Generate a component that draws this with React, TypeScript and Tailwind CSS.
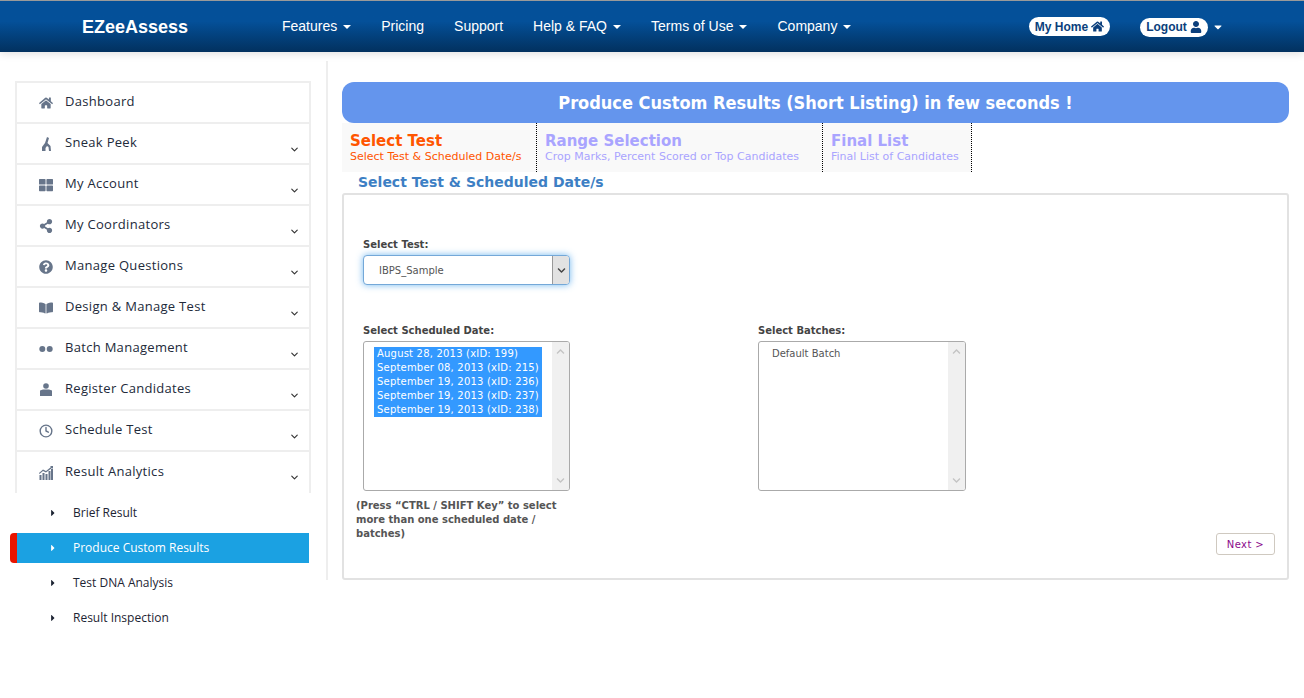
import React from "react";
import { FaHome, FaUser, FaQuestionCircle, FaShareAlt, FaThLarge, FaBookOpen, FaCaretRight, FaCaretDown, FaChevronUp, FaChevronDown } from "react-icons/fa";
import { LuChevronDown } from "react-icons/lu";
import { FiClock } from "react-icons/fi";

const Dots = () => (
  <svg width="14" height="8" viewBox="0 0 14 8"><circle cx="3.3" cy="4" r="3" fill="currentColor" /><circle cx="10.7" cy="4" r="3" fill="currentColor" /></svg>
);
const Peek = () => (
  <svg width="11" height="14" viewBox="0 0 11 14"><path d="M6 0 L8 1 L6.5 6 L9.5 9 L10 14 L8 14 L7.5 10 L6 9 L4.5 11 L4.5 14 L1 14 L1 10 L4 6 Z" fill="currentColor" /></svg>
);
const Reg = () => (
  <svg width="12" height="13" viewBox="0 0 12 13"><circle cx="6" cy="3" r="2.8" fill="currentColor" /><path d="M0 13 V7.5 L3 6.5 H9 L12 7.5 V13 Z" fill="currentColor" /></svg>
);
const Chart = () => (
  <svg width="14" height="14" viewBox="0 0 14 14" fill="currentColor"><rect x="0.5" y="9" width="2" height="5" /><rect x="3.5" y="7" width="2" height="7" /><rect x="6.5" y="8" width="2" height="6" /><rect x="9.5" y="5" width="2" height="9" /><rect x="12" y="3" width="2" height="11" /><path d="M0 7 L4 3.5 L7 5 L12 1 L11 0 H14 V3 L13 2 L7 6.5 L4 5 L0.5 8 Z" /></svg>
);

const menu: [string, React.ReactNode, boolean][] = [
  ["Dashboard", <FaHome size={14} />, false],
  ["Sneak Peek", <Peek />, true],
  ["My Account", <FaThLarge size={14} />, true],
  ["My Coordinators", <FaShareAlt size={14} />, true],
  ["Manage Questions", <FaQuestionCircle size={14} />, true],
  ["Design & Manage Test", <FaBookOpen size={14} />, true],
  ["Batch Management", <Dots />, true],
  ["Register Candidates", <Reg />, true],
  ["Schedule Test", <FiClock size={14} strokeWidth={2.4} />, true],
  ["Result Analytics", <Chart />, true],
];
const subs = ["Brief Result", "Produce Custom Results", "Test DNA Analysis", "Result Inspection"];
const nav: [string, boolean][] = [["Features", true], ["Pricing", false], ["Support", false], ["Help & FAQ", true], ["Terms of Use", true], ["Company", true]];
const dates = ["August 28, 2013 (xID: 199)", "September 08, 2013 (xID: 215)", "September 19, 2013 (xID: 236)", "September 19, 2013 (xID: 237)", "September 19, 2013 (xID: 238)"];

const Scroll = () => (
  <div className="w-[17px] h-full bg-[#f0f0f0] flex flex-col justify-between items-center py-[5px] text-[#c4c4c4]">
    <FaChevronUp size={9} />
    <FaChevronDown size={9} />
  </div>
);

export default function App() {
  return (
    <div className="w-[1304px] h-[698px] bg-white overflow-hidden font-['Liberation_Sans',sans-serif]">
      <header className="h-[52px] border-t border-[#9a9a9a] bg-gradient-to-b from-[#045099] from-[40%] to-[#02315f] flex items-center text-white shadow-[0_2px_8px_rgba(0,0,0,0.12)] relative">
        <div className="w-[282px] pl-[82px] text-[18px] font-bold leading-none">EZeeAssess</div>
        <nav className="flex text-[14px] w-[747px]">
          {nav.map(([n, c]) => (
            <div key={n} className="flex items-center mr-[30px]">
              {n}
              {c && <span className="ml-[6px] w-0 h-0 border-x-[4px] border-x-transparent border-t-[4px] border-t-white" />}
            </div>
          ))}
        </nav>
        <div className="h-[19px] w-[81px] rounded-full bg-white text-[#0b3f7c] text-[12px] font-bold flex items-center justify-center gap-[3px]">My Home <FaHome size={13} /></div>
        <div className="ml-[30px] h-[19px] w-[68px] rounded-full bg-white text-[#0b3f7c] text-[12px] font-bold flex items-center justify-center gap-[3px] mt-[1px]">Logout <FaUser size={12} /></div>
        <FaCaretDown size={12} className="ml-[4px] mt-[1px]" />
      </header>

      <div className="flex items-start pt-[9px]">
        <aside className="w-[326px] shrink-0 pt-[20px] pl-[15px]">
          <div className="w-[296px] border-x-2 border-t-2 border-[#eeeeee] h-[412px] overflow-hidden font-['Open_Sans',sans-serif]">
            {menu.map(([label, icon, chev]) => (
              <div key={label} className="h-[41px] border-b-2 last:border-b-0 border-[#eeeeee] flex items-center text-[13px] text-[#222a3a] tracking-[0.3px] relative">
                <div className="w-[20px] ml-[19px] mr-[9px] flex justify-center text-[#67758a]">{icon}</div>
                <span className="-mt-[2px]">{label}</span>
                {chev && <LuChevronDown size={11} strokeWidth={2.5} className="absolute right-[9px] top-[20px] text-[#333]" />}
              </div>
            ))}
          </div>
          <div className="-ml-[5px] w-[299px] mt-[2px] font-['Open_Sans',sans-serif] text-[12px] text-[#1d2433]">
            {subs.map((s, i) => (
              <div key={s} className={i === 1 ? "h-[30px] my-[5px] flex items-center bg-[#1ba1e2] text-white border-l-[7px] border-[#e81500] rounded-l-[4px]" : "h-[30px] my-[5px] flex items-center border-l-[7px] border-transparent"}>
                <FaCaretRight size={10} className="ml-[31px] mr-[15px]" />
                <span>{s}</span>
              </div>
            ))}
          </div>
        </aside>

        <main className="w-[978px] h-[519px] border-l-2 border-[#eeeeee] pl-[14px] pt-[21px] pr-[15px]">
          <div className="h-[41px] w-[947px] rounded-[12px] bg-[#6495ed] text-white text-[18px] font-bold flex items-center justify-center font-['DejaVu_Sans_Condensed','DejaVu_Sans',sans-serif]">Produce Custom Results (Short Listing) in few seconds !</div>
          <div className="flex h-[49px] font-['DejaVu_Sans',sans-serif]">
            {[
              ["Select Test", "Select Test & Scheduled Date/s", "w-[195px]", "text-[#ff5500]"],
              ["Range Selection", "Crop Marks, Percent Scored or Top Candidates", "w-[286px]", "text-[#a9a4ff]"],
              ["Final List", "Final List of Candidates", "w-[149px]", "text-[#a9a4ff]"],
            ].map(([t, d, w, c]) => (
              <div key={t} className={`${w} ${c} h-full bg-[#f9f9f9] border-r border-dotted border-black pl-[8px] pt-[10px] whitespace-nowrap`}>
                <div className="text-[15px] font-bold leading-[16px]">{t}</div>
                <div className="text-[11px] leading-[16px]">{d}</div>
              </div>
            ))}
          </div>
          <div className="h-[21px] pl-[16px] text-[14px] font-bold text-[#3d7fc4] leading-[21px] font-['DejaVu_Sans',sans-serif] whitespace-nowrap">Select Test &amp; Scheduled Date/s</div>
          <section className="w-[947px] h-[387px] border-2 border-[#e2e2e2] rounded-[3px] pl-[19px] pt-[43px] font-['DejaVu_Sans',sans-serif] text-[#444]">
            <div className="text-[10px] font-bold leading-[14px]">Select Test:</div>
            <div className="mt-[3px] w-[207px] h-[30px] rounded-[4px] border border-[#74a8d8] shadow-[0_0_7px_rgba(82,168,236,0.8)] bg-white flex items-center text-[10px] text-[#555] overflow-hidden">
              <span className="flex-1 pl-[15px]">IBPS_Sample</span>
              <div className="w-[17px] h-full bg-[#e2e2e2] border-l border-[#999] flex items-center justify-center text-[#444]"><FaChevronDown size={9} /></div>
            </div>
            <div className="flex mt-[39px]">
              <div className="w-[395px] shrink-0">
                <div className="text-[10px] font-bold leading-[14px]">Select Scheduled Date:</div>
                <div className="mt-[3px] w-[207px] h-[150px] rounded-[3px] border border-[#aaa] flex overflow-hidden">
                  <div className="flex-1 pl-[10px] pr-[10px] pt-[5px] min-w-0">
                    {dates.map((d) => (
                      <div key={d} className="h-[14px] bg-[#3399ff] text-white text-[10px] leading-[14px] pl-[3px] whitespace-nowrap overflow-hidden tracking-[0.2px]">{d}</div>
                    ))}
                  </div>
                  <Scroll />
                </div>
              </div>
              <div>
                <div className="text-[10px] font-bold leading-[14px]">Select Batches:</div>
                <div className="mt-[3px] w-[208px] h-[150px] rounded-[3px] border border-[#aaa] flex overflow-hidden">
                  <div className="flex-1 pl-[13px] pt-[5px] text-[10px] leading-[14px] text-[#555]">Default Batch</div>
                  <Scroll />
                </div>
              </div>
            </div>
            <div className="flex items-start -ml-[7px] mt-[8px]">
              <div className="w-[215px] text-[10px] font-bold leading-[14px] text-[#555] shrink-0">(Press “CTRL / SHIFT Key” to select more than one scheduled date / batches)</div>
              <div className="ml-auto mr-[12px] mt-[34px] w-[59px] h-[22px] rounded-[3px] border border-[#cfc9c0] text-[#8b0a8b] text-[10px] flex items-center justify-center tracking-[0.4px]">Next &gt;</div>
            </div>
          </section>
        </main>
      </div>
    </div>
  );
}
